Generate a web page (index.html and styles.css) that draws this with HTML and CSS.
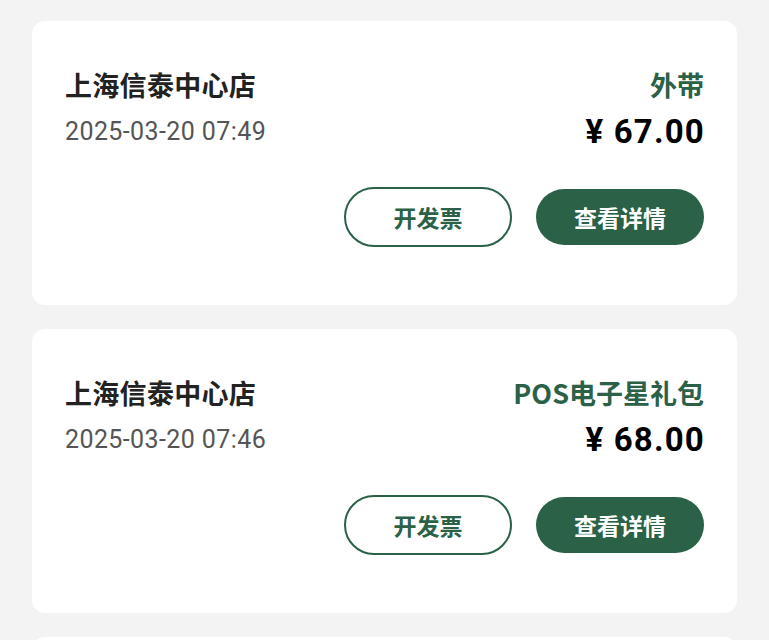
FILE: index.html
```html
<!DOCTYPE html>
<html lang="zh-CN">
<head>
<meta charset="utf-8">
<link rel="stylesheet" href="styles.css">
</head>
<body>
<div class="list">
  <div class="card">
    <div class="top">
      <div class="left">
        <div class="shop">上海信泰中心店</div>
        <div class="date">2025-03-20 07:49</div>
      </div>
      <div class="right">
        <div class="type">外带</div>
        <div class="price">¥ 67.00</div>
      </div>
    </div>
    <div class="actions">
      <div class="btn outline">开发票</div>
      <div class="btn filled">查看详情</div>
    </div>
  </div>
  <div class="card">
    <div class="top">
      <div class="left">
        <div class="shop">上海信泰中心店</div>
        <div class="date">2025-03-20 07:46</div>
      </div>
      <div class="right">
        <div class="type">POS电子星礼包</div>
        <div class="price">¥ 68.00</div>
      </div>
    </div>
    <div class="actions">
      <div class="btn outline">开发票</div>
      <div class="btn filled">查看详情</div>
    </div>
  </div>
  <div class="card"></div>
</div>
</body>
</html>
```

FILE: styles.css
```css
html, body {
  margin: 0;
  padding: 0;
  background: #f3f3f3;
  font-family: "Noto Sans CJK SC", "Noto Sans", sans-serif;
}
.list {
  display: flex;
  flex-direction: column;
  gap: 24px;
  padding: 21px 32px 0;
}
.card {
  background: #ffffff;
  border-radius: 13px;
  padding: 45px 33px 58px;
  min-height: 181px;
}
.top {
  display: flex;
  justify-content: space-between;
}
.left, .right {
  display: flex;
  flex-direction: column;
  gap: 10px;
}
.right {
  align-items: flex-end;
}
.shop {
  font-size: 27px;
  font-weight: 700;
  line-height: 38px;
  color: #222222;
  letter-spacing: 0.3px;
}
.date {
  font-family: Roboto, "Noto Sans", sans-serif;
  font-size: 25px;
  line-height: 36px;
  color: #555555;
  letter-spacing: 0.4px;
}
.type {
  font-size: 27px;
  font-weight: 700;
  line-height: 38px;
  color: #2a6147;
}
.price {
  font-family: Roboto, "Noto Sans", sans-serif;
  font-size: 33px;
  font-weight: 700;
  line-height: 36px;
  color: #000000;
  letter-spacing: 1.2px;
  margin-right: -1px;
}
.actions {
  display: flex;
  justify-content: flex-end;
  align-items: center;
  gap: 24px;
  margin-top: 37px;
}
.btn {
  width: 168px;
  flex: none;
  box-sizing: border-box;
  border-radius: 30px;
  display: flex;
  align-items: center;
  justify-content: center;
  font-size: 23px;
  font-weight: 700;
}
.outline {
  height: 60px;
  border: 2px solid #2a6147;
  color: #2a6147;
}
.filled {
  height: 56px;
  background: #2a6147;
  color: #ffffff;
}
```
